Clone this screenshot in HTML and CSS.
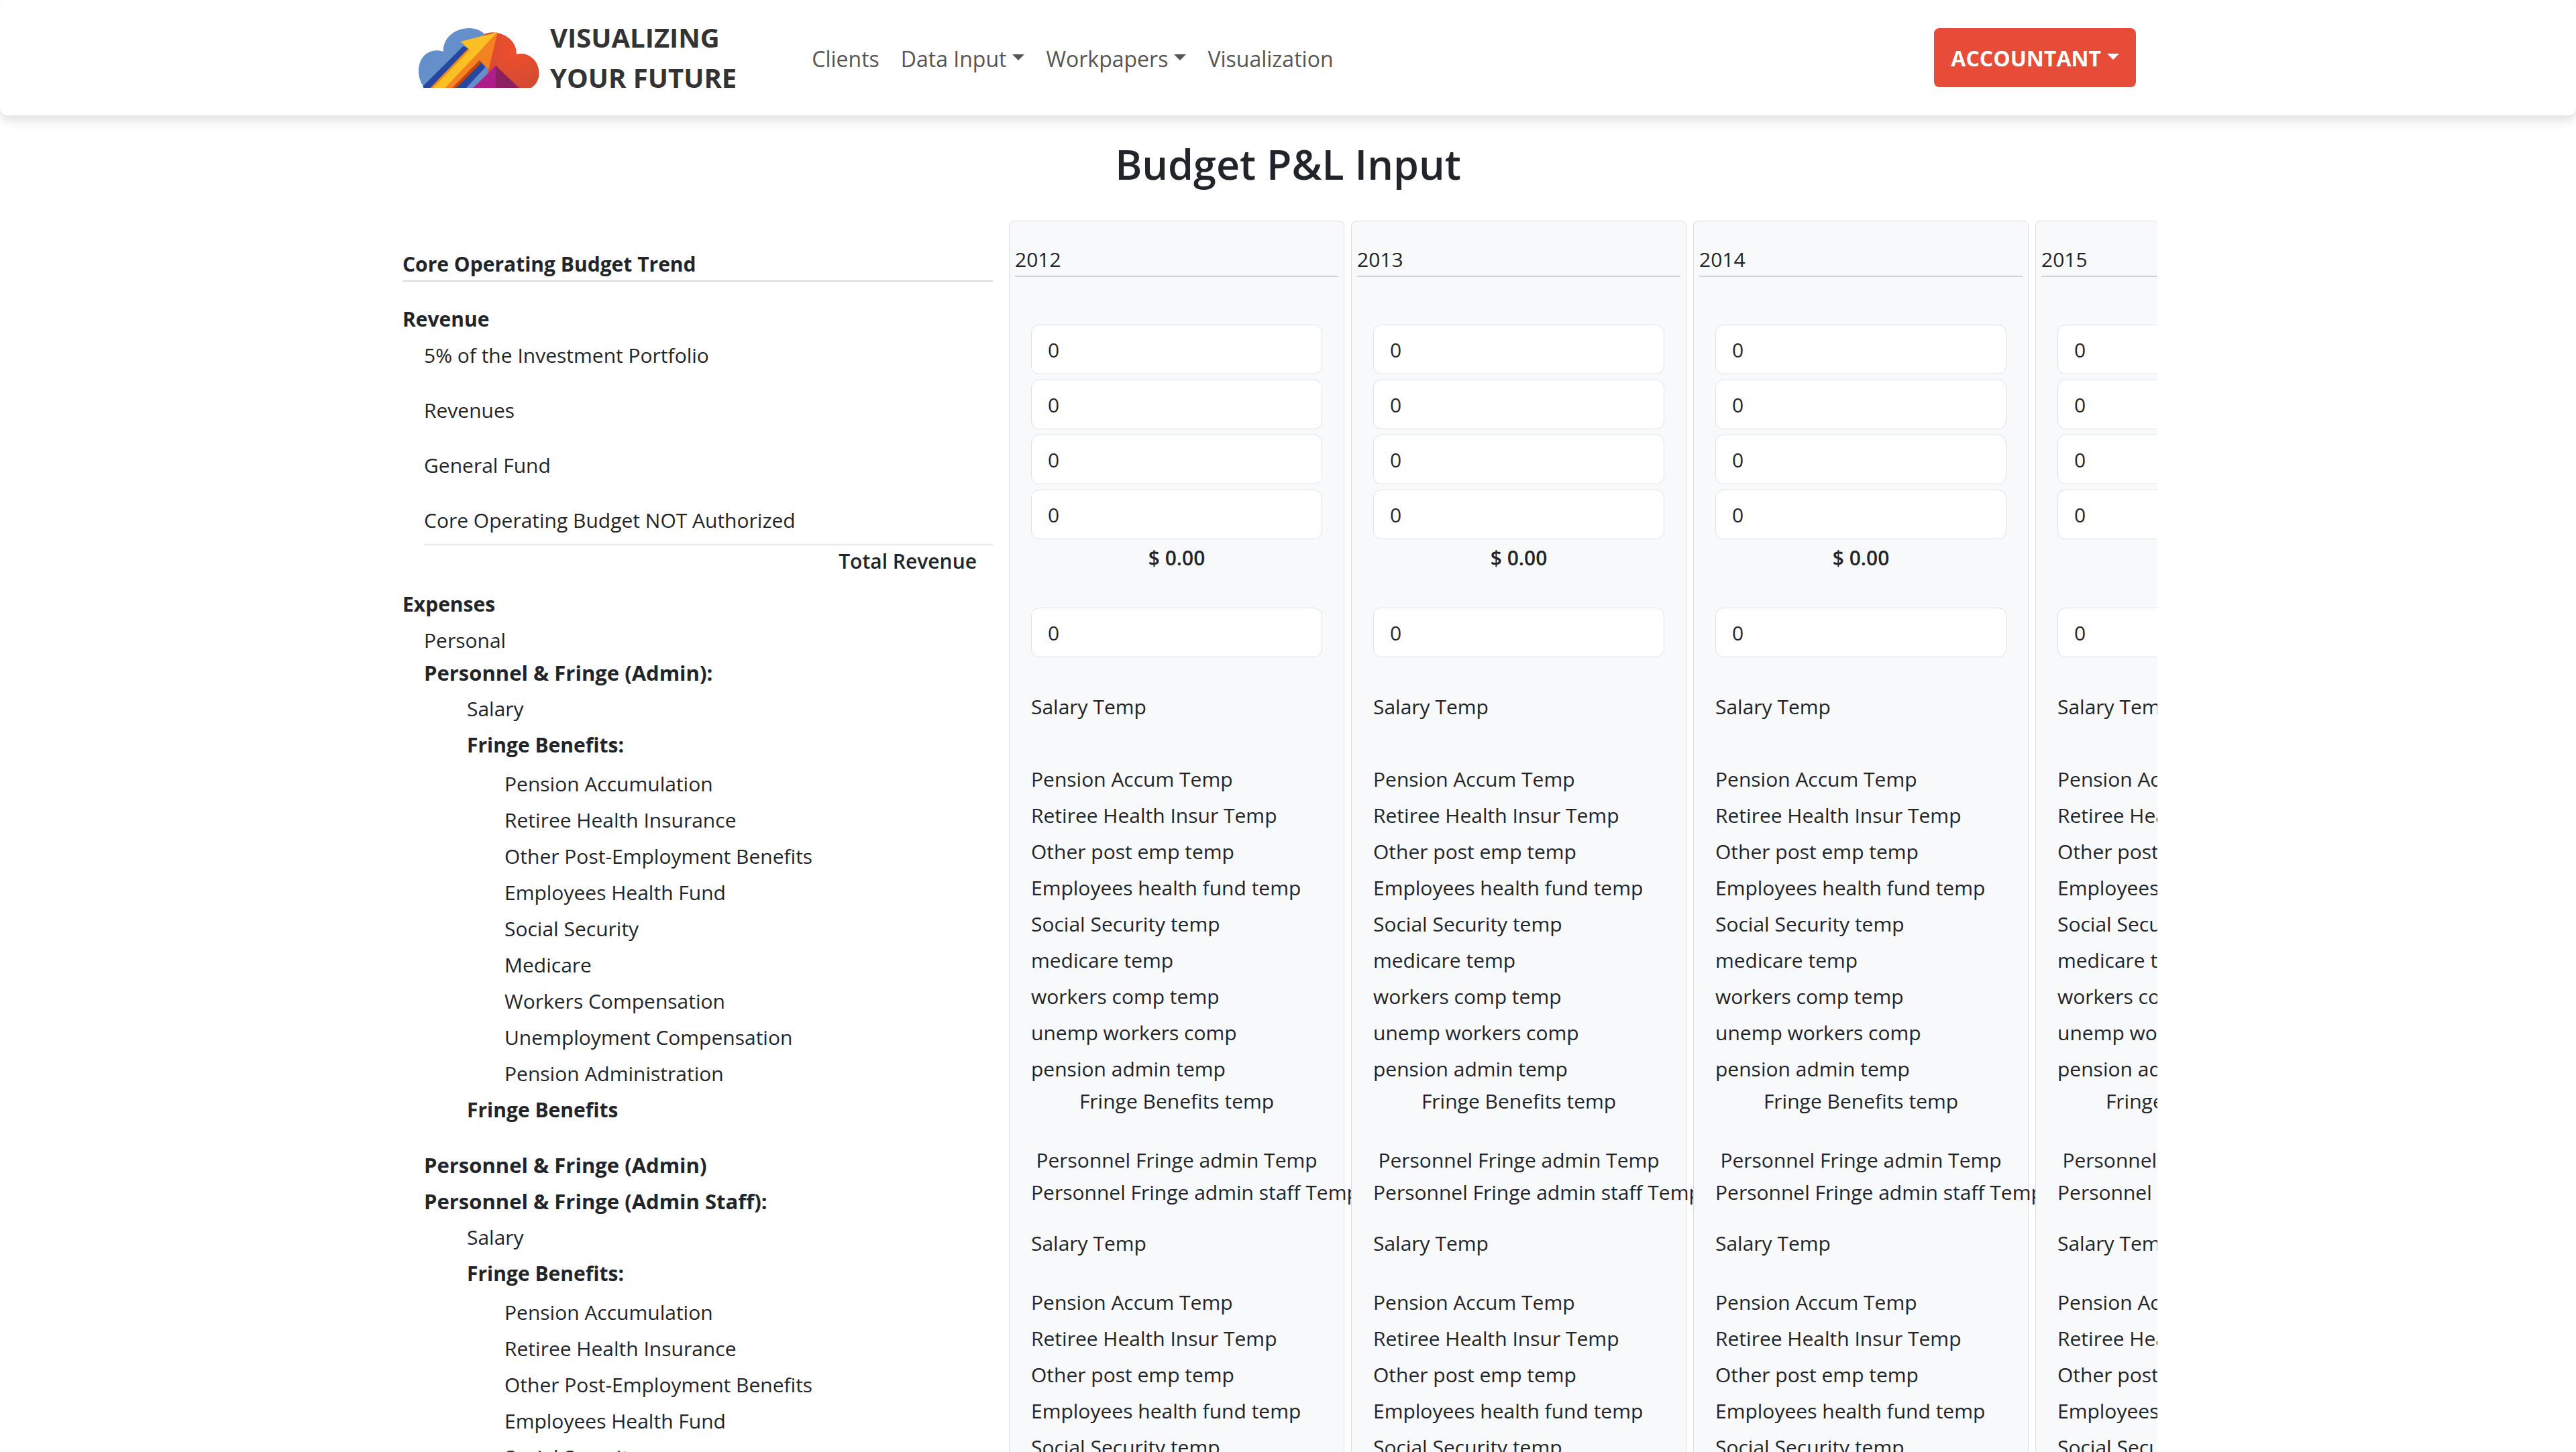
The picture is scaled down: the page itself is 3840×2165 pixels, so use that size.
FILE: index.html
```
<!DOCTYPE html>
<html lang="en">
<head>
<meta charset="utf-8">
<meta name="viewport" content="width=device-width, initial-scale=1">
<title>Budget P&amp;L Input</title>
<link rel="stylesheet" href="styles.css">
</head>
<body>
<header class="site-header">
  <div class="container header-inner">
    <a class="brand" href="#">
      <svg class="brand-logo" viewBox="72 63 540 268" aria-hidden="true">
        <defs>
          <radialGradient id="cloud-red" gradientUnits="userSpaceOnUse" cx="505" cy="160" r="180">
            <stop offset="0" stop-color="#f04e2c"/>
            <stop offset="1" stop-color="#d24b33"/>
          </radialGradient>
        </defs>
        <path fill="#648fca" d="M98 331C62 290 62 218 98 184C121 162 154 158 182 168C180 106 234 63 298 63C328 63 352 74 370 92L400 200V331Z"/>
        <path fill="url(#cloud-red)" d="M366 90C385 80 407 80 426 85C478 95 513 136 510 180C560 166 612 206 612 266C612 295 596 320 576 331H382V240Z"/>
        <path fill="#24489f" d="M272 143L294 155L124 331H94L89 325Z"/>
        <path fill="#648fca" d="M371 238L382 248V331H285Z"/>
        <path fill="#24489f" d="M352 216L371 238L285 331H238Z"/>
        <path fill="#c74300" d="M345 206L354 217L240 331H218Z"/>
        <path fill="#f58220" d="M294 154L300 160L190 331H124Z"/>
        <path fill="#f58220" d="M426 80L385 249L345 206L222 331H188Z"/>
        <path fill="#fcbf24" d="M426 80L259 123L300 160L136 331H190Z"/>
        <path fill="#ae1e8b" d="M418 231L316 331H418Z"/>
        <path fill="#8b1f60" d="M417 231L522 331H417Z"/>
      </svg>
      <span class="brand-name">VISUALIZING<br>YOUR FUTURE</span>
    </a>
    <nav class="main-nav" aria-label="Main">
      <a class="nav-link" href="#">Clients</a>
      <a class="nav-link" href="#">Data Input<span class="caret"></span></a>
      <a class="nav-link" href="#">Workpapers<span class="caret"></span></a>
      <a class="nav-link" href="#">Visualization</a>
    </nav>
    <button class="account-button" type="button">ACCOUNTANT<span class="caret"></span></button>
  </div>
</header>

<main class="page">
  <h1 class="page-title">Budget P&amp;L Input</h1>
  <div class="container board">
    <section class="labels">
      <h2 class="trend-heading">Core Operating Budget Trend</h2>

      <h3 class="row heading">Revenue</h3>
      <div class="row indent-1 field" id="lbl-portfolio">5% of the Investment Portfolio</div>
      <div class="row indent-1 field" id="lbl-revenues">Revenues</div>
      <div class="row indent-1 field" id="lbl-general">General Fund</div>
      <div class="row offset-1 ruled" id="lbl-unauthorized">Core Operating Budget NOT Authorized</div>
      <div class="row total">Total Revenue</div>

      <h3 class="row heading">Expenses</h3>
      <div class="row indent-1 tight" id="lbl-personal">Personal</div>
      <h4 class="row indent-1 heading group-heading">Personnel &amp; Fringe (Admin):</h4>
      <div class="row indent-2">Salary</div>
      <h5 class="row indent-2 heading list-heading">Fringe Benefits:</h5>
      <div class="row indent-3">Pension Accumulation</div>
      <div class="row indent-3">Retiree Health Insurance</div>
      <div class="row indent-3">Other Post-Employment Benefits</div>
      <div class="row indent-3">Employees Health Fund</div>
      <div class="row indent-3">Social Security</div>
      <div class="row indent-3">Medicare</div>
      <div class="row indent-3">Workers Compensation</div>
      <div class="row indent-3">Unemployment Compensation</div>
      <div class="row indent-3">Pension Administration</div>
      <div class="row indent-2 heading section-end">Fringe Benefits</div>

      <div class="row indent-1 heading group-heading">Personnel &amp; Fringe (Admin)</div>
      <h4 class="row indent-1 heading group-heading">Personnel &amp; Fringe (Admin Staff):</h4>
      <div class="row indent-2">Salary</div>
      <h5 class="row indent-2 heading list-heading">Fringe Benefits:</h5>
      <div class="row indent-3">Pension Accumulation</div>
      <div class="row indent-3">Retiree Health Insurance</div>
      <div class="row indent-3">Other Post-Employment Benefits</div>
      <div class="row indent-3">Employees Health Fund</div>
      <div class="row indent-3">Social Security</div>
    </section>

    <div class="years">
      <section class="year-card">
        <h2 class="year" id="y2012">2012</h2>
        <div class="values">
          <div class="inputs">
            <input type="text" value="0" aria-labelledby="y2012 lbl-portfolio">
            <input type="text" value="0" aria-labelledby="y2012 lbl-revenues">
            <input type="text" value="0" aria-labelledby="y2012 lbl-general">
            <input type="text" value="0" aria-labelledby="y2012 lbl-unauthorized">
          </div>
          <div class="sum">$ 0.00</div>
          <input type="text" value="0" aria-labelledby="y2012 lbl-personal">
          <div class="salary">Salary Temp</div>
          <div class="benefits">
            <div>Pension Accum Temp</div>
            <div>Retiree Health Insur Temp</div>
            <div>Other post emp temp</div>
            <div>Employees health fund temp</div>
            <div>Social Security temp</div>
            <div>medicare temp</div>
            <div>workers comp temp</div>
            <div>unemp workers comp</div>
            <div>pension admin temp</div>
          </div>
          <div class="centered">Fringe Benefits temp</div>
          <div class="centered group-total">Personnel Fringe admin Temp</div>
          <div>Personnel Fringe admin staff Temp</div>
          <div class="salary-staff">Salary Temp</div>
          <div class="benefits">
            <div>Pension Accum Temp</div>
            <div>Retiree Health Insur Temp</div>
            <div>Other post emp temp</div>
            <div>Employees health fund temp</div>
            <div>Social Security temp</div>
          </div>
        </div>
      </section>

      <section class="year-card">
        <h2 class="year" id="y2013">2013</h2>
        <div class="values">
          <div class="inputs">
            <input type="text" value="0" aria-labelledby="y2013 lbl-portfolio">
            <input type="text" value="0" aria-labelledby="y2013 lbl-revenues">
            <input type="text" value="0" aria-labelledby="y2013 lbl-general">
            <input type="text" value="0" aria-labelledby="y2013 lbl-unauthorized">
          </div>
          <div class="sum">$ 0.00</div>
          <input type="text" value="0" aria-labelledby="y2013 lbl-personal">
          <div class="salary">Salary Temp</div>
          <div class="benefits">
            <div>Pension Accum Temp</div>
            <div>Retiree Health Insur Temp</div>
            <div>Other post emp temp</div>
            <div>Employees health fund temp</div>
            <div>Social Security temp</div>
            <div>medicare temp</div>
            <div>workers comp temp</div>
            <div>unemp workers comp</div>
            <div>pension admin temp</div>
          </div>
          <div class="centered">Fringe Benefits temp</div>
          <div class="centered group-total">Personnel Fringe admin Temp</div>
          <div>Personnel Fringe admin staff Temp</div>
          <div class="salary-staff">Salary Temp</div>
          <div class="benefits">
            <div>Pension Accum Temp</div>
            <div>Retiree Health Insur Temp</div>
            <div>Other post emp temp</div>
            <div>Employees health fund temp</div>
            <div>Social Security temp</div>
          </div>
        </div>
      </section>

      <section class="year-card">
        <h2 class="year" id="y2014">2014</h2>
        <div class="values">
          <div class="inputs">
            <input type="text" value="0" aria-labelledby="y2014 lbl-portfolio">
            <input type="text" value="0" aria-labelledby="y2014 lbl-revenues">
            <input type="text" value="0" aria-labelledby="y2014 lbl-general">
            <input type="text" value="0" aria-labelledby="y2014 lbl-unauthorized">
          </div>
          <div class="sum">$ 0.00</div>
          <input type="text" value="0" aria-labelledby="y2014 lbl-personal">
          <div class="salary">Salary Temp</div>
          <div class="benefits">
            <div>Pension Accum Temp</div>
            <div>Retiree Health Insur Temp</div>
            <div>Other post emp temp</div>
            <div>Employees health fund temp</div>
            <div>Social Security temp</div>
            <div>medicare temp</div>
            <div>workers comp temp</div>
            <div>unemp workers comp</div>
            <div>pension admin temp</div>
          </div>
          <div class="centered">Fringe Benefits temp</div>
          <div class="centered group-total">Personnel Fringe admin Temp</div>
          <div>Personnel Fringe admin staff Temp</div>
          <div class="salary-staff">Salary Temp</div>
          <div class="benefits">
            <div>Pension Accum Temp</div>
            <div>Retiree Health Insur Temp</div>
            <div>Other post emp temp</div>
            <div>Employees health fund temp</div>
            <div>Social Security temp</div>
          </div>
        </div>
      </section>

      <section class="year-card">
        <h2 class="year" id="y2015">2015</h2>
        <div class="values">
          <div class="inputs">
            <input type="text" value="0" aria-labelledby="y2015 lbl-portfolio">
            <input type="text" value="0" aria-labelledby="y2015 lbl-revenues">
            <input type="text" value="0" aria-labelledby="y2015 lbl-general">
            <input type="text" value="0" aria-labelledby="y2015 lbl-unauthorized">
          </div>
          <div class="sum">$ 0.00</div>
          <input type="text" value="0" aria-labelledby="y2015 lbl-personal">
          <div class="salary">Salary Temp</div>
          <div class="benefits">
            <div>Pension Accum Temp</div>
            <div>Retiree Health Insur Temp</div>
            <div>Other post emp temp</div>
            <div>Employees health fund temp</div>
            <div>Social Security temp</div>
            <div>medicare temp</div>
            <div>workers comp temp</div>
            <div>unemp workers comp</div>
            <div>pension admin temp</div>
          </div>
          <div class="centered">Fringe Benefits temp</div>
          <div class="centered group-total">Personnel Fringe admin Temp</div>
          <div>Personnel Fringe admin staff Temp</div>
          <div class="salary-staff">Salary Temp</div>
          <div class="benefits">
            <div>Pension Accum Temp</div>
            <div>Retiree Health Insur Temp</div>
            <div>Other post emp temp</div>
            <div>Employees health fund temp</div>
            <div>Social Security temp</div>
          </div>
        </div>
      </section>
    </div>
  </div>
</main>
</body>
</html>
```

FILE: styles.css
```
*,
*::before,
*::after {
  box-sizing: border-box;
}

body {
  display: flex;
  flex-direction: column;
  height: 100vh;
  margin: 0;
  overflow: hidden;
  background: #fff;
  color: #212529;
  font-family: "Segoe UI", "Open Sans", sans-serif;
  font-size: 30px;
  line-height: 48px;
}

h1, h2, h3, h4, h5 {
  margin: 0;
  font-size: inherit;
}

.container {
  width: 100%;
  max-width: 2640px;
  margin: 0 auto;
}

/* Header */
.site-header {
  flex: none;
  padding: 26px 0;
  border-radius: 12px;
  background: #fff;
  box-shadow: 0 8px 16px rgba(0, 0, 0, 0.12);
  font-family: "Open Sans", sans-serif;
}

.header-inner {
  display: flex;
  align-items: center;
  padding: 0 56px 0 24px;
}

.brand {
  display: flex;
  align-items: center;
  gap: 16px;
  color: #333;
  text-decoration: none;
}

.brand-logo {
  width: 180px;
  height: 89px;
}

.brand-name {
  font-size: 40px;
  font-weight: 700;
  line-height: 60px;
}

.main-nav {
  display: flex;
  gap: 32px;
  margin-left: 112px;
  padding-top: 3px;
}

.nav-link {
  color: #555;
  font-size: 32px;
  text-decoration: none;
}

.caret {
  display: inline-block;
  margin-left: 9px;
  border: 9px solid transparent;
  border-top-color: currentColor;
  border-bottom: 0;
  vertical-align: 10px;
}

.account-button {
  margin-left: auto;
  padding: 21px 25px 19px;
  border: 0;
  border-radius: 8px;
  background: #e74c38;
  color: #fff;
  font: 700 32px/48px "Open Sans", sans-serif;
}

/* Page body */
.page {
  flex: 1;
  min-height: 0;
  overflow: hidden;
  padding-top: 34px;
}

.page-title {
  margin-bottom: 46px;
  font-size: 61px;
  font-weight: 600;
  line-height: 77px;
  text-align: center;
}

.board {
  display: flex;
  gap: 24px;
  padding-right: 24px;
}

/* Row labels */
.labels {
  flex: 0 0 880px;
  padding-top: 41px;
}

.trend-heading {
  margin-bottom: 32px;
  border-bottom: 2px solid #d9dadb;
  font-weight: 700;
}

.row {
  margin-bottom: 6px;
  font-weight: 400;
}

.heading { font-weight: 700; }
.indent-1 { padding-left: 32px; }
.indent-2 { padding-left: 96px; }
.indent-3 { padding-left: 152px; }
.offset-1 { margin-left: 32px; }
.field { margin-bottom: 34px; }
.tight { margin-bottom: 0; }
.group-heading { font-size: 31px; }
.list-heading { margin-bottom: 10px; }
.section-end { margin-bottom: 34px; }

.ruled {
  margin-bottom: 0;
  padding-bottom: 12px;
  border-bottom: 1px solid #c8c9ca;
}

.total {
  margin-bottom: 16px;
  padding-right: 24px;
  font-weight: 600;
  text-align: right;
}

/* Year columns */
.years {
  display: flex;
  flex: 1;
  gap: 10px;
  min-width: 0;
  overflow: hidden;
}

/* Each card is its own layer, so it covers text running out of the card before it */
.year-card {
  flex: 0 0 500px;
  min-width: 0;
  isolation: isolate;
  padding: 33px 8px;
  border: 1px solid #dcdddf;
  border-radius: 8px;
  background: #f8f9fb;
  white-space: nowrap;
}

.year {
  margin-bottom: 71px;
  border-bottom: 2px solid #d2d3d5;
  font-weight: 400;
}

.values {
  padding: 0 24px;
}

.inputs {
  display: grid;
  gap: 8px;
}

.values input {
  display: block;
  width: 100%;
  height: 74px;
  padding: 12px 24px;
  border: 1px solid #dee2e6;
  border-radius: 12px;
  background: #fff;
  color: inherit;
  font: inherit;
}

.sum {
  margin: 4px 0 50px;
  font-weight: 600;
  text-align: center;
}

.salary { margin: 50px 0 60px; }

.benefits {
  display: grid;
  gap: 6px;
}

.centered { text-align: center; }
.group-total { margin-top: 40px; }
.salary-staff { margin: 28px 0 40px; }
```
